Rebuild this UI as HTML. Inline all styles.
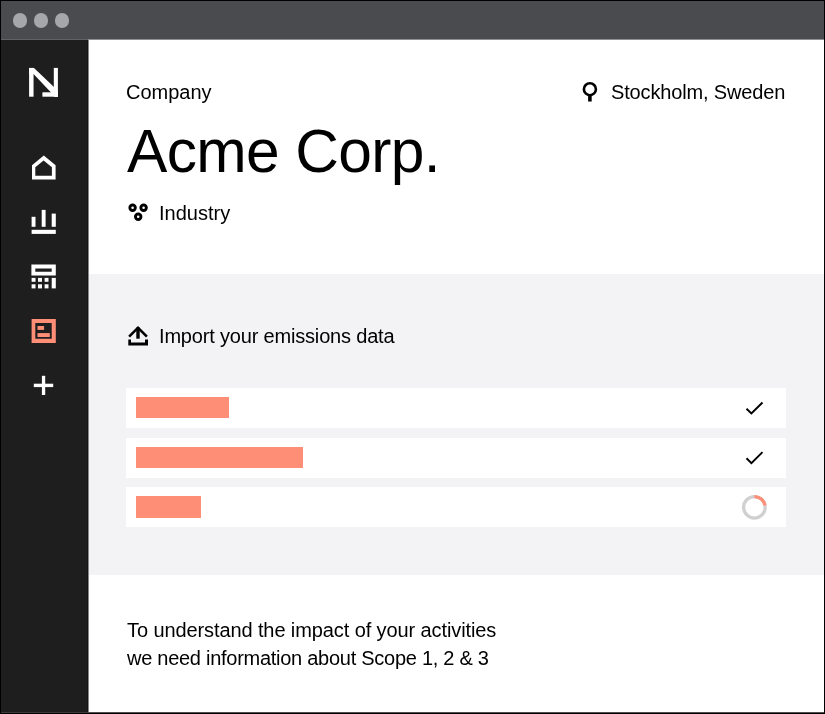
<!DOCTYPE html>
<html><head><meta charset="utf-8">
<style>
*{margin:0;padding:0;box-sizing:border-box}
html,body{width:825px;height:714px;overflow:hidden;background:#000}
body{position:relative;font-family:"Liberation Sans",sans-serif;color:#000}
.abs{position:absolute}
#titlebar{left:1px;top:1px;width:823px;height:38px;background:#4a4b4f}
.dot{width:14.5px;height:14.5px;border-radius:50%;background:#a6a7ab;top:13.25px}
#sidebar{left:1px;top:40px;width:86px;height:672px;background:#1e1e1e}
#main{left:89px;top:40px;width:735px;height:672px;background:#fff}
#gray{left:89px;top:274px;width:735px;height:301px;background:#f3f3f5}
.row{left:126px;width:660px;height:40px;background:#fff}
.bar{left:136px;height:21.5px;background:#ff8e77}
.t{position:absolute;white-space:nowrap;line-height:1;will-change:transform}
svg{position:absolute;left:0;top:0}
</style></head><body>
<div id="titlebar" class="abs"></div>
<div class="dot abs" style="left:12.75px"></div>
<div class="dot abs" style="left:33.75px"></div>
<div class="dot abs" style="left:54.75px"></div>
<div id="sidebar" class="abs"></div>
<div id="main" class="abs"></div>
<div id="gray" class="abs"></div>
<div class="abs" style="left:1px;top:39px;width:87px;height:1px;background:#606165"></div>
<div class="abs" style="left:88px;top:39px;width:736px;height:1px;background:#8e8f92"></div>
<div class="abs" style="left:87px;top:40px;width:1px;height:672px;background:#141414"></div>
<div class="abs" style="left:88px;top:40px;width:1px;height:672px;background:#8a8a8a"></div>
<div class="abs" style="left:1px;top:712px;width:87px;height:1px;background:#3a3a3a"></div>
<div class="abs" style="left:88px;top:712px;width:736px;height:1px;background:#4d4d4d"></div>

<div class="row abs" style="top:388px"></div>
<div class="row abs" style="top:437.6px"></div>
<div class="row abs" style="top:487.3px"></div>
<div class="bar abs" style="top:396.9px;width:93.3px"></div>
<div class="bar abs" style="top:446.7px;width:166.5px"></div>
<div class="bar abs" style="top:496.4px;width:65px"></div>

<svg width="825" height="714" viewBox="0 0 825 714">
  <!-- logo -->
  <g fill="#fff">
    <rect x="29.1" y="67.9" width="4.45" height="28.8"/>
    <rect x="53.8" y="67.9" width="4.1" height="28.8"/>
    <rect x="42.4" y="92.3" width="15.5" height="4.4"/>
    <polygon points="29.1,67.9 34,67.9 57.9,90.7 57.9,96.7 55.05,96.7 33.55,73.9 29.1,73.9"/>
  </g>
  <!-- house -->
  <path fill="#fff" fill-rule="evenodd" d="M32 179.4V165.2L43.8 155.6L55.6 165.2V179.4Z M35.3 175.8H51.9V167.3L43.6 160.4L35.3 167.3Z"/>
  <!-- bars -->
  <g fill="#fff">
    <rect x="31.6" y="216.8" width="3.9" height="10"/>
    <rect x="41.7" y="209.9" width="3.9" height="16.9"/>
    <rect x="51.7" y="213.6" width="4.1" height="13.2"/>
    <rect x="31.6" y="229.8" width="24.2" height="4.1"/>
  </g>
  <!-- calculator -->
  <g fill="#fff">
    <path fill-rule="evenodd" d="M31.4 264.4H55.8V275.4H31.4Z M35.3 268.5V271.7H51.7V268.5Z"/>
    <rect x="31.6" y="277.9" width="3.9" height="3.9"/>
    <rect x="38" y="277.9" width="4" height="3.9"/>
    <rect x="44.6" y="277.9" width="3.9" height="3.9"/>
    <rect x="31.6" y="284.3" width="3.9" height="4.1"/>
    <rect x="38" y="284.3" width="4" height="4.1"/>
    <rect x="44.6" y="284.3" width="3.9" height="4.1"/>
    <rect x="51.7" y="277.9" width="4.1" height="10.5"/>
  </g>
  <!-- orange doc -->
  <g fill="#ff8e77">
    <path fill-rule="evenodd" d="M31.6 318.9H55.8V342.9H31.6Z M35.3 323V338.7H51.7V323Z"/>
    <rect x="37.5" y="326" width="6.6" height="3.9"/>
    <rect x="37.5" y="333.1" width="12.3" height="3.9"/>
  </g>
  <!-- plus -->
  <g fill="#fff">
    <rect x="41.9" y="375.8" width="3.3" height="19.2"/>
    <rect x="33.8" y="383.7" width="19.4" height="3.4"/>
  </g>
  <!-- pin -->
  <circle cx="589.9" cy="89.2" r="6" fill="none" stroke="#000" stroke-width="2.6"/>
  <rect x="588.1" y="95" width="3.6" height="6.5" fill="#000"/>
  <!-- industry -->
  <g fill="none" stroke="#000" stroke-width="2.9">
    <circle cx="132.6" cy="207.7" r="2.75"/>
    <circle cx="143.6" cy="207.7" r="2.75"/>
    <circle cx="138.2" cy="216.8" r="2.75"/>
  </g>
  <!-- upload -->
  <g fill="#000">
    <polygon points="128.2,335.7 138,325.9 147.8,335.7 146,337.6 138,329.6 130,337.6"/>
    <rect x="136.3" y="327.5" width="3.4" height="11.2"/>
    <path d="M128.3 339.6H131V342.6H145V339.6H148V345.5H128.3Z"/>
  </g>
  <!-- checks -->
  <g fill="none" stroke="#000" stroke-width="1.95" stroke-linecap="butt" stroke-linejoin="miter">
    <polyline points="746.5,408.7 751.4,413.5 762.5,402.5"/>
    <polyline points="746.5,458.3 751.4,463.1 762.5,452.1"/>
  </g>
  <!-- spinner -->
  <circle cx="754.4" cy="507.3" r="10.75" fill="none" stroke="#d0d0d0" stroke-width="3.3"/>
  <path d="M754.4 496.55 A10.75 10.75 0 0 1 765 505.4" fill="none" stroke="#ff8e77" stroke-width="3.3"/>
</svg>

<div class="t" style="left:126px;top:81.5px;font-size:20px">Company</div>
<div class="t" style="left:127px;top:121.3px;font-size:60.5px;letter-spacing:-0.65px">Acme Corp.</div>
<div class="t" style="left:611px;top:81.5px;font-size:20px;letter-spacing:-0.15px">Stockholm, Sweden</div>
<div class="t" style="left:159px;top:202.5px;font-size:20px">Industry</div>
<div class="t" style="left:159px;top:326px;font-size:20px;letter-spacing:-0.18px">Import your emissions data</div>
<div class="t" style="left:126.5px;top:619.5px;font-size:20px;letter-spacing:-0.1px">To understand the impact of your activities</div>
<div class="t" style="left:126.5px;top:647.5px;font-size:20px;letter-spacing:-0.27px">we need information about Scope 1, 2 &amp; 3</div>
</body></html>
